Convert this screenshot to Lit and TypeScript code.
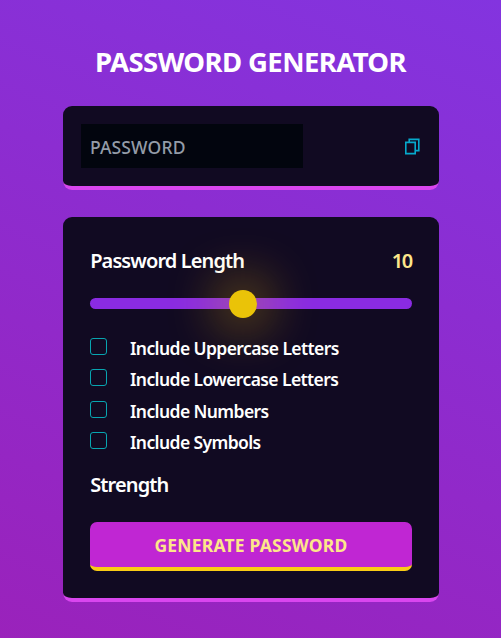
import { LitElement, html, css } from "lit";
import { customElement, state } from "lit/decorators.js";

@customElement("app-root")
export class AppRoot extends LitElement {
  static styles = css`
    :host {
      display: flex;
      flex-direction: column;
      align-items: center;
      box-sizing: border-box;
      height: 638px;
      padding-top: 44px;
      background: linear-gradient(22deg, #9a22bb, #8334df);
      color: #fff;
      font-family: "Noto Sans", "Open Sans", sans-serif;
      font-weight: 600;
      overflow: hidden;
    }
    * { box-sizing: border-box; }
    .title {
      margin: 0 0 24px;
      height: 38px;
      font-size: 27.5px;
      line-height: 36px;
      font-weight: 700;
      letter-spacing: -0.6px;
      white-space: nowrap;
    }
    .card {
      width: 376px;
      border-radius: 9px;
      border-bottom: 4.5px solid #d946ef;
      background: #110a22;
    }
    .output {
      display: flex;
      align-items: center;
      justify-content: space-between;
      height: 84px;
      padding: 0 18px;
      margin-bottom: 27px;
    }
    .field {
      width: 222.5px;
      height: 44px;
      padding: 1px 9.5px 0;
      border: 0;
      outline: 0;
      background: #02050e;
      color: #fff;
      font: 500 17.5px/43px "Noto Sans", "Open Sans", sans-serif;
      letter-spacing: 0.15px;
    }
    .field::placeholder { color: #949ca8; opacity: 1; }
    .copy {
      display: flex;
      width: 17px;
      height: 18px;
      padding: 0;
      border: 0;
      background: none;
      color: #06a9cc;
    }
    .settings {
      display: flex;
      flex-direction: column;
      height: 385px;
      padding: 29px 27px 0;
    }
    .row { display: flex; justify-content: space-between; font-size: 20px; line-height: 29px; }
    .label { padding-left: 0.7px; letter-spacing: -0.9px; }
    .count { color: #fde68a; letter-spacing: -1.6px; }
    .slider {
      appearance: none;
      width: 322px;
      height: 11px;
      margin: 23px 0 28.5px;
      border-radius: 6px;
      background: #8a2be2;
      outline: 0;
    }
    .slider::-webkit-slider-thumb {
      appearance: none;
      width: 28px;
      height: 28px;
      border-radius: 50%;
      background: #eac308;
      box-shadow: 0 0 54px 3px rgba(234, 179, 8, 1);
    }
    .options { display: flex; flex-direction: column; }
    .option { display: flex; height: 31.5px; font-size: 17.5px; line-height: 20px; letter-spacing: -0.6px; }
    .box {
      appearance: none;
      width: 17px;
      height: 17px;
      margin: 0 23.5px 0 0;
      border: 1px solid #08a5b0;
      border-radius: 3px;
    }
    .strength { margin-top: 6px; padding-left: 0.7px; font-size: 20px; line-height: 30px; letter-spacing: -0.87px; }
    .generate {
      height: 49px;
      margin-top: 22px;
      border: 0;
      border-bottom: 4.5px solid #facc15;
      border-radius: 7px;
      background: #c026d3;
      color: #fde68a;
      font: 700 17.5px/44px "Noto Sans", "Open Sans", sans-serif;
      letter-spacing: 0.2px;
      text-indent: 1px;
    }
  `;

  @state() private length = 10;

  private options = ["Uppercase Letters", "Lowercase Letters", "Numbers", "Symbols"];

  private setLength(e: Event) {
    this.length = Number((e.target as HTMLInputElement).value);
  }

  render() {
    return html`
      <h1 class="title">PASSWORD GENERATOR</h1>
      <div class="card output">
        <input class="field" placeholder="PASSWORD" readonly />
        <button class="copy" aria-label="Copy">
          <svg width="17" height="18" viewBox="0 0 17 18" fill="none" stroke="currentColor" stroke-width="1.6">
            <path d="M1.8 5.4H11.2V16.6H1.8ZM5.2 5.4V2.4H14.8V13.6H11.2" />
          </svg>
        </button>
      </div>
      <div class="card settings">
        <div class="row">
          <span class="label">Password Length</span>
          <span class="count">${this.length}</span>
        </div>
        <input class="slider" type="range" min="1" max="20" .value=${String(this.length)} @input=${this.setLength} />
        <div class="options">
          ${this.options.map(
            (name) => html`<label class="option"><input class="box" type="checkbox" /><span>Include ${name}</span></label>`
          )}
        </div>
        <div class="strength">Strength</div>
        <button class="generate">GENERATE PASSWORD</button>
      </div>
    `;
  }
}
